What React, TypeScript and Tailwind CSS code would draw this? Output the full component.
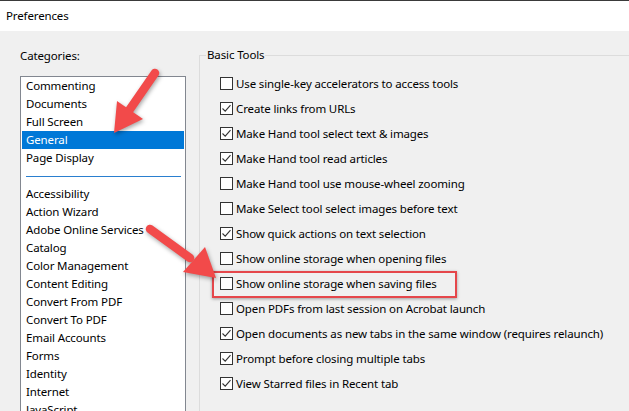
import React from "react";

const groupA = ["Commenting", "Documents", "Full Screen", "General", "Page Display"];
const groupB = [
  "Accessibility",
  "Action Wizard",
  "Adobe Online Services",
  "Catalog",
  "Color Management",
  "Content Editing",
  "Convert From PDF",
  "Convert To PDF",
  "Email Accounts",
  "Forms",
  "Identity",
  "Internet",
  "JavaScript",
];

const options: { label: string; checked: boolean; boxed?: boolean }[] = [
  { label: "Use single-key accelerators to access tools", checked: false },
  { label: "Create links from URLs", checked: true },
  { label: "Make Hand tool select text & images", checked: true },
  { label: "Make Hand tool read articles", checked: true },
  { label: "Make Hand tool use mouse-wheel zooming", checked: false },
  { label: "Make Select tool select images before text", checked: false },
  { label: "Show quick actions on text selection", checked: true },
  { label: "Show online storage when opening files", checked: false },
  { label: "Show online storage when saving files", checked: false, boxed: true },
  { label: "Open PDFs from last session on Acrobat launch", checked: false },
  { label: "Open documents as new tabs in the same window (requires relaunch)", checked: true },
  { label: "Prompt before closing multiple tabs", checked: true },
  { label: "View Starred files in Recent tab", checked: true },
];

function Checkbox({ checked }: { checked: boolean }) {
  return (
    <span className="w-[13px] h-[13px] border border-[#333333] bg-white flex items-center justify-center shrink-0">
      {checked && (
        <svg width="11" height="11" viewBox="0 0 11 11">
          <path d="M1.5 5.5 L4.2 8.2 L9.5 2.2" fill="none" stroke="#333333" strokeWidth="1.1" />
        </svg>
      )}
    </span>
  );
}

export default function App() {
  return (
    <div
      className="relative w-[629px] h-[411px] overflow-hidden bg-[#f0f0f0] text-black text-[11.5px] leading-[16px] tracking-[-0.13px]"
      style={{ fontFamily: '"Noto Sans", "Open Sans", sans-serif' }}
    >
      <div className="h-[31px] bg-white border-t border-[#3a3a3a] flex items-center pl-[6px]">
        Preferences
      </div>
      <div className="flex">
        <div className="pl-[20px] w-[199px] shrink-0">
          <div className="mt-[17px] h-[16px]">Categories:</div>
          <div className="mt-[12px] w-[166px] h-[400px] bg-white border-l border-t border-r border-[#828790] flex flex-col">
            {groupA.map((c) => (
              <div
                key={c}
                className={
                  c === "General"
                    ? "h-[18px] mx-[1px] pl-[4px] flex items-center bg-[#0078d7] text-white"
                    : "h-[18px] mx-[1px] pl-[4px] flex items-center"
                }
              >
                {c}
              </div>
            ))}
            <div className="mt-[9px] ml-[5px] mr-[4px] h-[1px] bg-[#2a7fcf]" />
            <div className="mt-[8px] flex flex-col">
              {groupB.map((c) => (
                <div key={c} className="h-[18px] mx-[1px] pl-[4px] flex items-center whitespace-nowrap">
                  {c}
                </div>
              ))}
            </div>
          </div>
        </div>
        <div className="relative mt-[24px] flex-1 h-[400px] border-l border-t border-[#dcdcdc]">
          <span className="absolute -top-[9px] left-[6px] bg-[#f0f0f0] px-[1px] leading-[16px]">Basic Tools</span>
          <div className="pt-[15px] pl-[20px] flex flex-col">
            {options.map((o) => (
              <div key={o.label} className="relative h-[25px] flex items-center gap-[3px] whitespace-nowrap">
                <Checkbox checked={o.checked} />
                <span>{o.label}</span>
                {o.boxed && (
                  <span className="absolute -left-[8px] top-[0px] w-[245px] h-[27px] border-2 border-[#e5474b] shadow-[0_1px_3px_rgba(0,0,0,0.35)]" />
                )}
              </div>
            ))}
          </div>
        </div>
      </div>
      <svg
        className="absolute left-0 top-0 pointer-events-none"
        width="629"
        height="411"
        viewBox="0 0 629 411"
        style={{ filter: "drop-shadow(1px 2px 2px rgba(0,0,0,0.35))" }}
      >
        <line x1="155" y1="73" x2="128" y2="112" stroke="#f24a4a" strokeWidth="8.5" strokeLinecap="round" />
        <polygon points="114,133 117,101 143,119" fill="#f24a4a" />
        <line x1="150" y1="229" x2="190" y2="258" stroke="#f24a4a" strokeWidth="8.5" strokeLinecap="round" />
        <polygon points="216,278 205,247 183,272" fill="#f24a4a" />
      </svg>
    </div>
  );
}
